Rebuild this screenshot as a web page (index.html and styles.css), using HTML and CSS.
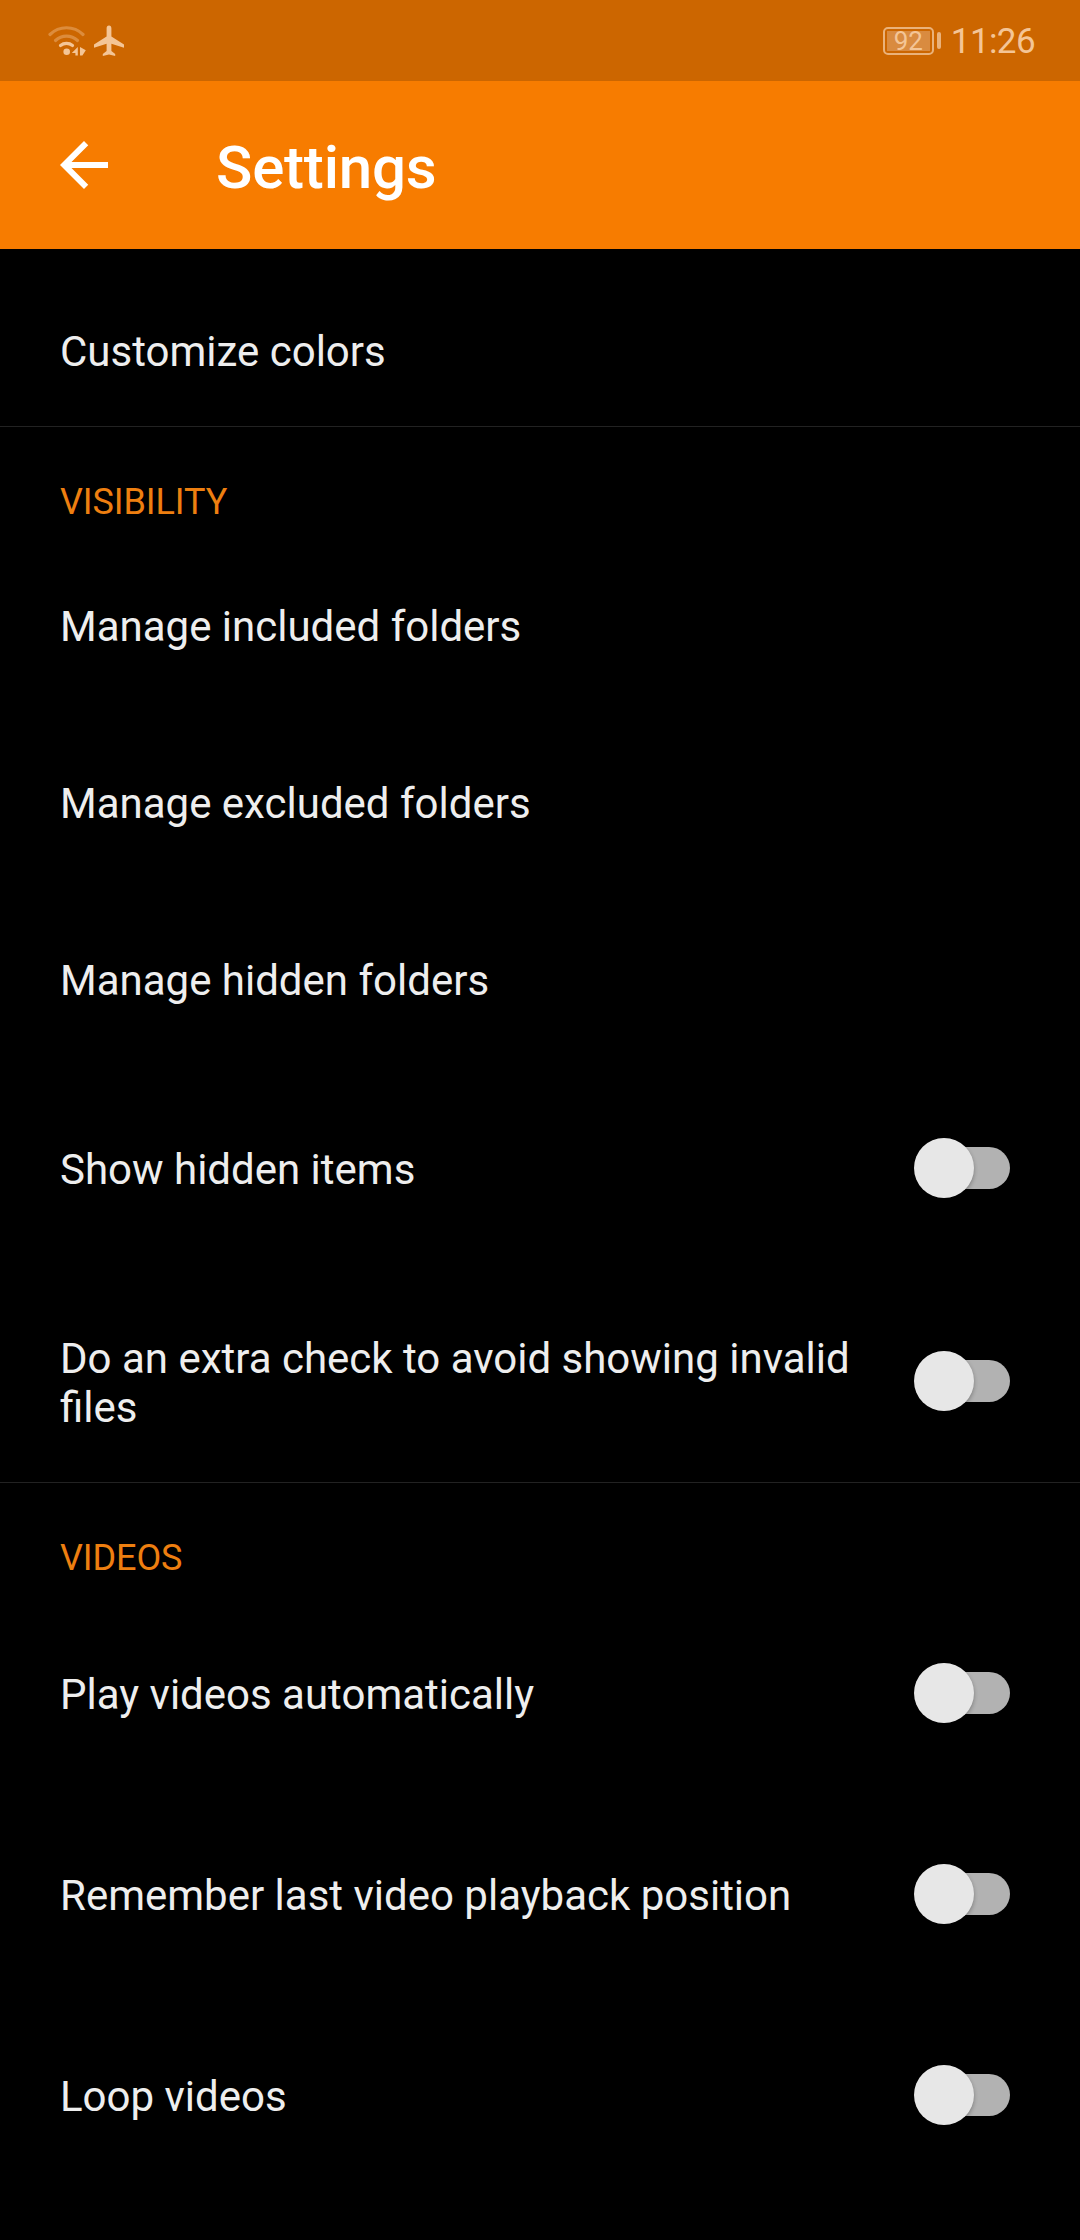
FILE: index.html
```html
<!DOCTYPE html>
<html lang="en">
  <head>
    <meta charset="UTF-8" />
    <meta name="viewport" content="width=device-width, initial-scale=1.0" />
    <title>Settings</title>
    <link rel="stylesheet" href="styles.css">
  </head>
  <body>
    <div class="screen">
      <!-- Status bar -->
      <div class="status-bar">
        <div class="status-icons">
          <svg class="icon-wifi" width="38" height="32" viewBox="0 0 38 32">
            <g fill="none" stroke="#f4c596" stroke-width="3.2" stroke-linecap="round">
              <path d="M2 9.5a23.5 23.5 0 0 1 33 0" opacity="0.4" />
              <path d="M7.5 15.5a16 16 0 0 1 22 0" opacity="0.4" />
              <path d="M12.500 20.500a9.500 9.500 0 0 1 12 0" />
            </g>
            <g fill="#f4c596">
              <circle cx="18.700" cy="26.700" r="3.300" />
              <path d="M29.800 22v8.600h-2.400v-2.600h-3.600zM32 22l5.800 3.200-3.400 5.400H32z" />
            </g>
          </svg>
          <svg class="icon-plane" width="32" height="32" viewBox="0 0 32 32">
            <path d="M16 .5c1.6 0 2.4 1.2 2.4 2.8v8.2l12.6 8v3.2l-12.6-4v7.4l3.8 2.8v2.2L16 29.400l-6.200 1.700v-2.200l3.800-2.800v-7.400L1 22.700v-3.200l12.600-8V3.300C13.600 1.700 14.400.5 16 .5z" fill="#f4c596" />
          </svg>
        </div>
        <div class="status-right">
          <div class="battery">
            <div class="battery-body">
              <div class="battery-level">92</div>
            </div>
            <div class="battery-tip"></div>
          </div>
          <span class="clock">11:26</span>
        </div>
      </div>
      <!-- Toolbar -->
      <div class="toolbar">
        <svg class="icon-back" width="72" height="72" viewBox="0 0 24 24">
          <path d="M20 11H7.830l5.590-5.590L12 4l-8 8 8 8 1.410-1.410L7.830 13H20v-2z" fill="#fff" />
        </svg>
        <h1>Settings</h1>
      </div>
      <!-- Settings list -->
      <div class="section section-colors">
        <div class="row"><span class="label">Customize colors</span></div>
      </div>
      <div class="section">
        <h2>VISIBILITY</h2>
        <div class="row"><span class="label">Manage included folders</span></div>
        <div class="row"><span class="label">Manage excluded folders</span></div>
        <div class="row"><span class="label">Manage hidden folders</span></div>
        <div class="row row-switch">
          <span class="label">Show hidden items</span>
          <span class="switch"><span class="thumb"></span></span>
        </div>
        <div class="row row-switch row-tall">
          <span class="label">Do an extra check to avoid showing invalid files</span>
          <span class="switch"><span class="thumb"></span></span>
        </div>
      </div>
      <div class="section">
        <h2>VIDEOS</h2>
        <div class="row row-switch">
          <span class="label">Play videos automatically</span>
          <span class="switch"><span class="thumb"></span></span>
        </div>
        <div class="row row-switch">
          <span class="label">Remember last video playback position</span>
          <span class="switch"><span class="thumb"></span></span>
        </div>
        <div class="row row-switch">
          <span class="label">Loop videos</span>
          <span class="switch"><span class="thumb"></span></span>
        </div>
      </div>
    </div>
  </body>
</html>
```
FILE: styles.css
```css
* {
  margin: 0;
  padding: 0;
  box-sizing: border-box;
}
body {
  font-family: Roboto, sans-serif;
  background-color: #000;
  color: #eee;
}
.screen {
  width: 1080px;
  height: 2240px;
  overflow: hidden;
}
/* Status bar */
.status-bar {
  height: 81px;
  background-color: #cc6600;
  color: #f4c596;
  padding: 0 45px 0 48px;
  display: flex;
  justify-content: space-between;
  align-items: center;
}
.status-icons {
  display: flex;
  gap: 7px;
}
.status-right {
  display: flex;
  align-items: center;
  gap: 10px;
}
.battery {
  display: flex;
  align-items: center;
  gap: 3px;
}
.battery-body {
  width: 51px;
  height: 28px;
  border: 2px solid #eab27a;
  border-radius: 5px;
  padding: 2px;
}
.battery-level {
  width: 43px;
  height: 20px;
  background-color: #d98b40;
  font-size: 26px;
  line-height: 20px;
  text-align: center;
}
.battery-tip {
  width: 4px;
  height: 17px;
  border-radius: 2px;
  background-color: #eab27a;
}
.clock {
  padding-top: 2px;
  font-size: 35px;
  line-height: 40px;
  letter-spacing: -0.6px;
}
/* Toolbar */
.toolbar {
  height: 168px;
  background-color: #f77c00;
  padding-left: 48px;
  display: flex;
  align-items: center;
}
.toolbar h1 {
  margin-left: 96px;
  padding-top: 5px;
  font-size: 60px;
  font-weight: 500;
  line-height: 70px;
  letter-spacing: -0.2px;
  color: #fff;
}
/* Settings list */
.section {
  border-bottom: 1px solid #222;
  padding-top: 54px;
}
.section:last-child {
  border-bottom: none;
}
.section-colors {
  padding-top: 14px;
}
.section h2 {
  padding-left: 60px;
  margin-bottom: 15px;
  font-size: 36px;
  font-weight: 400;
  line-height: 42px;
  letter-spacing: -0.1px;
  color: #ee7f10;
}
.row {
  height: 177px;
  padding: 0 70px 0 60px;
  display: flex;
  justify-content: space-between;
  align-items: center;
}
.row:last-child {
  margin-bottom: -14px;
}
.row-switch {
  height: 201px;
}
.row-tall {
  height: 226px;
}
.label {
  font-size: 42px;
  line-height: 49px;
}
.row-switch .label {
  width: 800px;
}
/* Switch */
.switch {
  width: 90px;
  height: 42px;
  margin-bottom: 4px;
  border-radius: 21px;
  background-color: #b2b2b2;
  display: flex;
  align-items: center;
}
.thumb {
  width: 60px;
  height: 60px;
  margin-left: -6px;
  border-radius: 50%;
  background-color: #e7e7e7;
  box-shadow: 0 2px 4px rgba(0, 0, 0, 0.3);
}
```
